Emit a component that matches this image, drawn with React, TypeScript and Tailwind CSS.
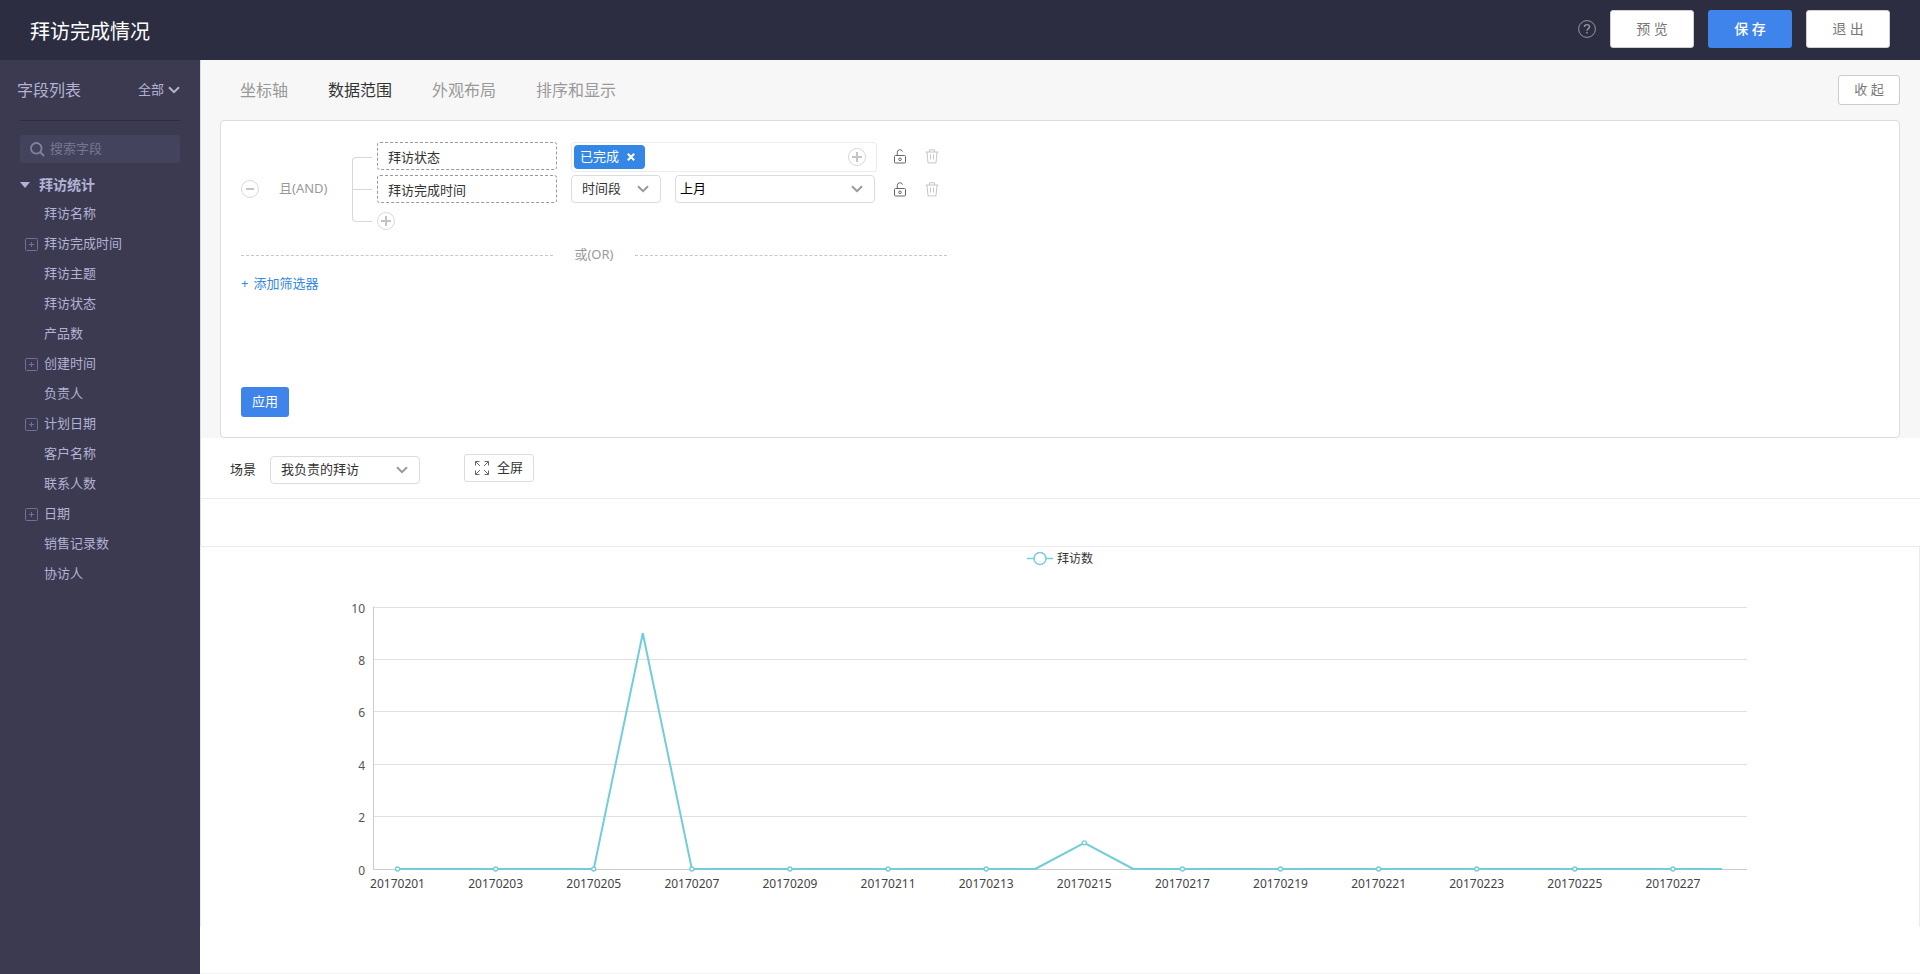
import React from "react";

type Field = { name: string; expandable?: boolean };

const FIELDS: Field[] = [
  { name: "拜访名称" },
  { name: "拜访完成时间", expandable: true },
  { name: "拜访主题" },
  { name: "拜访状态" },
  { name: "产品数" },
  { name: "创建时间", expandable: true },
  { name: "负责人" },
  { name: "计划日期", expandable: true },
  { name: "客户名称" },
  { name: "联系人数" },
  { name: "日期", expandable: true },
  { name: "销售记录数" },
  { name: "协访人" },
];

const TABS = ["坐标轴", "数据范围", "外观布局", "排序和显示"];

const VISITS = [
  0, 0, 0, 0, 0, 9, 0, 0, 0, 0, 0, 0, 0, 0, 1, 0, 0, 0, 0, 0, 0, 0, 0, 0, 0, 0, 0, 0,
];

function Chevron({ className }: { className: string }) {
  return (
    <svg viewBox="0 0 12 8" className={className} fill="none" stroke="currentColor" strokeWidth="2" aria-hidden="true">
      <path d="M1 1.2 6 6.2 11 1.2" />
    </svg>
  );
}

function CircleIcon({ plus = false }: { plus?: boolean }) {
  return (
    <svg viewBox="0 0 18 18" className="block size-[18px]" fill="none" aria-hidden="true">
      <circle cx="9" cy="9" r="8.5" stroke="#d8d8d8" />
      <path d={plus ? "M4 9H14M9 4V14" : "M5 9H13"} stroke="#c4c4c4" strokeWidth="2" />
    </svg>
  );
}

function LockIcon() {
  return (
    <svg viewBox="0 0 12 15" className="block h-[15px] w-3" fill="none" stroke="#666" aria-hidden="true">
      <rect x="0.5" y="6.5" width="11" height="7.5" rx="1" />
      <path d="M3.3 6.5V3.3A2.6 2.6 0 0 1 8.4 2.6" />
      <circle cx="6" cy="10.3" r="1.3" />
    </svg>
  );
}

function TrashIcon() {
  return (
    <svg viewBox="0 0 14 15" className="block h-[15px] w-3.5" fill="none" stroke="#c6c6c6" aria-hidden="true">
      <path d="M0.5 3H13.5M4.5 3V0.8H9.5V3M2 3 3 13.9H11L12 3M5.5 5.5V10.5M8.5 5.5V10.5" />
    </svg>
  );
}

function Dropdown({
  label,
  value,
  box,
  text,
}: {
  label: string;
  value: string;
  box: string;
  text: string;
}) {
  return (
    <div className={`relative h-7 ${box}`}>
      <select
        aria-label={label}
        defaultValue={value}
        className={`block h-full w-full appearance-none rounded-sm border border-[#dcdcdc] bg-white pr-7 text-[13px] ${text}`}
      >
        <option>{value}</option>
      </select>
      <Chevron className="pointer-events-none absolute top-2.5 right-3 h-2 w-3 text-[#999]" />
    </div>
  );
}

function RowActions() {
  return (
    <div className="flex h-7 items-center gap-[19px]">
      <button type="button" aria-label="锁定">
        <LockIcon />
      </button>
      <button type="button" aria-label="删除">
        <TrashIcon />
      </button>
    </div>
  );
}

function Header() {
  return (
    <header className="flex h-[60px] items-center justify-between bg-[#2d2d41] pr-[30px] pl-[30px]">
      <h1 className="pt-[3px] text-xl text-white">拜访完成情况</h1>
      <div className="flex items-center gap-3.5 pb-0.5">
        <button type="button" aria-label="帮助" className="text-[#96969f]">
          <svg viewBox="0 0 18 18" className="block size-[18px]" fill="none" stroke="currentColor" aria-hidden="true">
            <circle cx="9" cy="9" r="8.4" />
            <path strokeWidth="1.4" d="M6.4 7.1C6.4 5.4 7.5 4.6 9 4.6S11.6 5.5 11.6 6.8C11.6 8.5 9 8.7 9 10.7M9 12V13.6" />
          </svg>
        </button>
        <button type="button" className="h-[38px] w-[84px] rounded-[3px] border border-[#d0d0d0] bg-white text-sm text-[#777]">
          预 览
        </button>
        <button type="button" className="h-[38px] w-[84px] rounded-[3px] bg-[#3f84ea] text-sm font-medium text-white">
          保 存
        </button>
        <button type="button" className="h-[38px] w-[84px] rounded-[3px] border border-[#d0d0d0] bg-white text-sm text-[#777]">
          退 出
        </button>
      </div>
    </header>
  );
}

function Sidebar() {
  return (
    <aside className="w-[200px] shrink-0 bg-[#3b3a51] px-5 text-[13px] text-[#b2b2d2]">
      <div className="-ml-[3px] flex h-[60px] items-center justify-between">
        <h2 className="text-base">字段列表</h2>
        <button type="button" className="flex items-center gap-1">
          全部
          <Chevron className="h-2 w-3" />
        </button>
      </div>
      <div className="border-t border-[#2d2d41] pt-3.5">
        <label className="flex h-7 items-center gap-[5px] rounded-[3px] bg-[#43435d] pl-2.5 text-[#83829b]">
          <svg viewBox="0 0 15 15" className="size-[15px] shrink-0" fill="none" stroke="currentColor" strokeWidth="1.8" aria-hidden="true">
            <circle cx="6.3" cy="6.3" r="5.3" />
            <path d="M10.2 10.2 14 14" />
          </svg>
          <input
            type="text"
            aria-label="搜索字段"
            placeholder="搜索字段"
            className="w-full min-w-0 bg-transparent outline-none placeholder:text-[#77768e]"
          />
        </label>
      </div>
      <button type="button" className="mt-[7px] flex h-[29px] items-center gap-[9px] text-sm font-bold">
        <svg viewBox="0 0 10 6" className="h-1.5 w-2.5" fill="currentColor" aria-hidden="true">
          <path d="M0 0H10L5 6Z" />
        </svg>
        拜访统计
      </button>
      <ul>
        {FIELDS.map((field) => (
          <li key={field.name} className="flex h-[30px] items-center gap-1.5 pl-[5px]">
            {field.expandable ? (
              <button type="button" aria-label={`展开${field.name}`}>
                <svg viewBox="0 0 13 13" className="block size-[13px]" fill="none" stroke="#716f97" aria-hidden="true">
                  <rect x="0.5" y="0.5" width="12" height="12" rx="1" />
                  <path d="M4 6.5H9M6.5 4V9" />
                </svg>
              </button>
            ) : (
              <span className="w-[13px]" />
            )}
            {field.name}
          </li>
        ))}
      </ul>
    </aside>
  );
}

function Filters() {
  const fieldBox =
    "h-7 w-[180px] shrink-0 rounded-[3px] border border-dashed border-[#999] bg-white px-2.5 text-[#333]";
  return (
    <section className="flex h-[318px] flex-col items-start rounded border border-[#dcdcdc] bg-white px-5 pt-[21px] pb-5 text-[13px]">
      <div className="flex items-center">
        <button type="button" aria-label="移除条件组">
          <CircleIcon />
        </button>
        <span className="ml-5 w-[73px] text-[#999]">且(AND)</span>
        <div className="mr-[5px] h-[65px] w-5 rounded-l-sm border-y border-l border-[#d8d8d8]">
          <div className="h-8 border-b border-[#d8d8d8]" />
        </div>
        <div className="flex flex-col gap-[3px]">
          <div className="flex h-[30px] items-start">
            <input readOnly aria-label="筛选字段一" value="拜访状态" className={fieldBox} />
            <div className="ml-3.5 flex h-[30px] w-[306px] items-center justify-between rounded-[3px] border border-[#ececec] pr-2.5 pl-0.5">
              <span className="flex h-6 w-[71px] items-center justify-between rounded-sm bg-[#3487e4] pr-2.5 pl-1.5 text-white">
                已完成
                <button type="button" aria-label="移除已完成">
                  <svg viewBox="0 0 8 8" className="block size-2" stroke="currentColor" strokeWidth="2" aria-hidden="true">
                    <path d="M0.8 0.8 7.2 7.2M7.2 0.8 0.8 7.2" />
                  </svg>
                </button>
              </span>
              <button type="button" aria-label="添加选项">
                <CircleIcon plus />
              </button>
            </div>
            <div className="ml-[17px]">
              <RowActions />
            </div>
          </div>
          <div className="flex">
            <input readOnly aria-label="筛选字段二" value="拜访完成时间" className={fieldBox} />
            <Dropdown label="时间类型" value="时间段" box="ml-3.5 w-[90px]" text="pl-2.5 text-[#333]" />
            <Dropdown label="时间范围" value="上月" box="ml-3.5 w-[200px]" text="pl-1 text-black" />
            <div className="ml-[19px]">
              <RowActions />
            </div>
          </div>
          <div className="flex h-[30px] items-center">
            <button type="button" aria-label="添加条件">
              <CircleIcon plus />
            </button>
          </div>
        </div>
      </div>
      <div className="mt-[7px] flex h-6 w-[706px] items-center text-[#999]">
        <div className="flex-1 border-t border-dashed border-[#c8c8c8]" />
        <span className="w-[82px] text-center">或(OR)</span>
        <div className="flex-1 border-t border-dashed border-[#c8c8c8]" />
      </div>
      <button type="button" className="mt-[5px] flex h-6 items-center gap-[5px] text-[#3487e4]">
        <span>+</span>
        <span>添加筛选器</span>
      </button>
      <button type="button" className="mt-auto h-[30px] w-12 rounded-[3px] bg-[#3f84ea] text-white">
        应用
      </button>
    </section>
  );
}

function SceneBar() {
  return (
    <div className="flex h-[61px] items-center border-b border-[#ebebeb] pl-[29px] text-[13px] text-[#333]">
      <span className="pt-1">场景</span>
      <div className="pt-1">
        <Dropdown label="场景" value="我负责的拜访" box="ml-3.5 w-[150px]" text="pl-2.5 text-[#333]" />
      </div>
      <button
        type="button"
        className="ml-11 flex h-7 w-[70px] items-center justify-between rounded-[3px] border border-[#dcdcdc] bg-white px-2.5"
      >
        <svg viewBox="0 0 14 14" className="size-3.5" fill="none" stroke="#666" aria-hidden="true">
          <path d="M0.5 4.5V0.5H4.5M9.5 0.5H13.5V4.5M13.5 9.5V13.5H9.5M4.5 13.5H0.5V9.5M0.5 0.5 5 5M13.5 0.5 9 5M13.5 13.5 9 9M0.5 13.5 5 9" />
        </svg>
        全屏
      </button>
    </div>
  );
}

function VisitChart() {
  const left = 172.5;
  const right = 1546;
  const top = 60.5;
  const base = 322.5;
  const step = (right - left) / VISITS.length;
  const px = (i: number) => left + step * (i + 0.5) - 0.5;
  const py = (v: number) => base - 0.5 - (v * (base - top)) / 10;
  const ticks = [0, 2, 4, 6, 8, 10];

  return (
    <svg viewBox="0 0 1718 380" className="block h-auto w-full text-xs" role="img" aria-label="拜访数">
      <line x1="826" x2="852" y1="11.5" y2="11.5" stroke="#78cdd8" strokeWidth="1.5" />
      <circle cx="839" cy="11.5" r="6" fill="#fff" stroke="#78cdd8" strokeWidth="1.5" />
      <text x="856" y="16" fill="#333">
        拜访数
      </text>
      {ticks.map((t) => {
        const y = Math.round(base - (t * (base - top)) / 10) - 0.5;
        return (
          <g key={t}>
            {t > 0 && <line x1={left} x2={right} y1={y} y2={y} stroke="#e0e0e0" />}
            <text x="164" y={y + 5} textAnchor="end" fill="#555">
              {t}
            </text>
          </g>
        );
      })}
      <path d={`M${left} ${top - 1}V${base}H${right}`} fill="none" stroke="#ccc" />
      <polyline
        points={VISITS.map((v, i) => `${px(i)},${py(v)}`).join(" ")}
        fill="none"
        stroke="#72cdd8"
        strokeWidth="2"
        strokeLinejoin="bevel"
      />
      {VISITS.map((v, i) =>
        i % 2 === 0 ? (
          <g key={i}>
            <circle cx={px(i)} cy={py(v)} r="2" fill="#fff" stroke="#72cdd8" strokeWidth="1.3" />
            <text x={px(i)} y="341" textAnchor="middle" fill="#444">
              {20170201 + i}
            </text>
          </g>
        ) : null,
      )}
    </svg>
  );
}

export default function App() {
  return (
    <div className="flex min-h-screen flex-col bg-white font-['Noto_Sans','Noto_Sans_CJK_SC',sans-serif]">
      <Header />
      <div className="flex flex-1">
        <Sidebar />
        <main className="flex min-w-0 flex-1 flex-col border-b border-b-[#f4f4f4]">
          <div className="border-l border-[#dcdcdc]">
            <div className="bg-[#f7f7f7] pr-5 pl-[19px]">
              <div className="flex h-[60px] items-center justify-between pl-5">
                <nav className="flex gap-10 text-base">
                  {TABS.map((tab, i) => (
                    <button key={tab} type="button" className={i === 1 ? "text-[#333]" : "text-[#999]"}>
                      {tab}
                    </button>
                  ))}
                </nav>
                <button type="button" className="h-[30px] w-[62px] rounded-[3px] border border-[#ccc] bg-white text-[13px] text-[#777]">
                  收 起
                </button>
              </div>
              <Filters />
            </div>
            <SceneBar />
            <div className="h-[47px]" />
          </div>
          <section className="border border-b-0 border-[#ebebeb]">
            <VisitChart />
          </section>
        </main>
      </div>
    </div>
  );
}
